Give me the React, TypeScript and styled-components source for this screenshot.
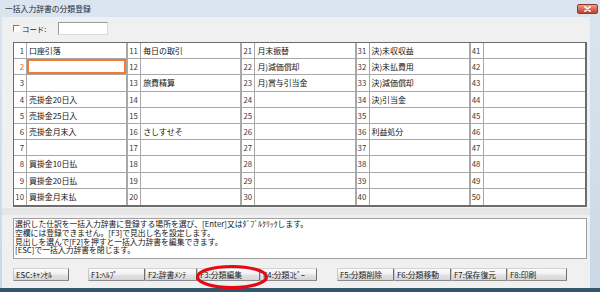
import React from 'react';
import styled, { createGlobalStyle } from 'styled-components';

const FONT = `"Noto Sans CJK JP", "Noto Sans", sans-serif`;

const GlobalStyle = createGlobalStyle`
  html, body { margin: 0; padding: 0; background: #ffffff; }
  body { width: 600px; height: 292px; overflow: hidden; font-family: ${FONT}; }
`;

const Window = styled.div`
  position: relative;
  width: 600px;
  height: 292px;
  box-sizing: border-box;
  display: flex;
  flex-direction: column;
  background: linear-gradient(to bottom, #dbe5ef, #cbd8e5);
  border-bottom: 4px solid #33566a;
  font-family: ${FONT};
`;

const TitleBar = styled.div`
  height: 17px;
  flex: none;
  display: flex;
  align-items: center;
  justify-content: space-between;
  padding: 0 2px 0 5px;
`;

const Title = styled.span`
  font-size: 7.8px;
  color: #1c2733;
`;

const CloseButton = styled.div`
  width: 21px;
  height: 10px;
  box-sizing: border-box;
  border-radius: 2px;
  border: 1px solid #8b3a2f;
  background: linear-gradient(to bottom, #e8a395 0%, #d46a57 50%, #c2412c 100%);
  display: flex;
  align-items: center;
  justify-content: center;
`;

const Client = styled.div`
  flex: 1;
  margin: 0 10px 0 2px;
  background: #f0f0f0;
  display: flex;
  flex-direction: column;
  padding: 5px 3px 0 11px;
  min-height: 0;
`;

const CodeRow = styled.div`
  height: 13px;
  display: flex;
  align-items: center;
`;

const CheckBox = styled.span`
  width: 7px;
  height: 7px;
  box-sizing: border-box;
  background: #ffffff;
  border-top: 1px solid #7a7a7a;
  border-left: 1px solid #7a7a7a;
  border-right: 1px solid #ffffff;
  border-bottom: 1px solid #ffffff;
  flex: none;
`;

const CodeLabel = styled.span`
  width: 36px;
  margin-left: 2px;
  font-size: 7.4px;
  color: #1a1a1a;
`;

const CodeInput = styled.div`
  width: 50px;
  height: 13px;
  box-sizing: border-box;
  background: #ffffff;
  border: 1px solid;
  border-color: #9a9a9a #dadada #dadada #9a9a9a;
`;

const Grid = styled.div`
  margin-top: 7px;
  height: 165px;
  flex: none;
  box-sizing: border-box;
  background: #ffffff;
  border: 1px solid #6c6c6c;
  border-right-width: 2px;
  border-bottom-width: 2px;
  display: grid;
  grid-template-columns: repeat(5, 13px 1fr);
  grid-template-rows: repeat(10, 1fr);
`;

const NumCell = styled.div<{ $first: boolean; $lastRow: boolean; $active: boolean }>`
  box-sizing: border-box;
  border-right: 1px solid #a8a8a8;
  border-bottom: ${p => (p.$lastRow ? 'none' : '1px solid #a8a8a8')};
  display: flex;
  align-items: center;
  justify-content: ${p => (p.$first ? 'flex-end' : 'flex-start')};
  padding: ${p => (p.$first ? '0 2px 0 0' : '0 0 0 1px')};
  font-size: 7.8px;
  color: ${p => (p.$active ? '#e2642c' : '#3b3b3b')};
  overflow: hidden;
`;

const TextCell = styled.div<{ $lastCol: boolean; $lastRow: boolean; $active: boolean }>`
  box-sizing: border-box;
  border-right: ${p => (p.$lastCol ? 'none' : '2px solid #a8a8a8')};
  border-bottom: ${p => (p.$lastRow ? 'none' : '1px solid #a8a8a8')};
  display: flex;
  align-items: center;
  padding-left: 2px;
  font-size: 8px;
  letter-spacing: -0.1px;
  color: #141414;
  white-space: nowrap;
  overflow: hidden;
  box-shadow: ${p => (p.$active ? 'inset 0 0 0 2px #f47a30' : 'none')};
`;

const Band = styled.div`
  margin: 1px -3px 0 -11px;
  height: 7px;
  flex: none;
  background: #e6e6e6;
`;

const Message = styled.div`
  margin-top: 3px;
  height: 41px;
  flex: none;
  box-sizing: border-box;
  background: #ffffff;
  border: 1px solid #a0a0a0;
  padding: 1px 1px 0 1px;
  font-size: 7.8px;
  line-height: 8.8px;
  color: #141414;
  white-space: pre;
  overflow: hidden;
`;

const ButtonBar = styled.div`
  margin-top: 9px;
  height: 13px;
  flex: none;
  display: flex;
`;

const Spacer = styled.div<{ $w: number }>`
  width: ${p => p.$w}px;
  flex: none;
`;

const FButton = styled.div<{ $w: number }>`
  width: ${p => p.$w}px;
  height: 13px;
  flex: none;
  box-sizing: border-box;
  padding-left: 2px;
  display: flex;
  align-items: center;
  font-size: 7.8px;
  color: #1a1a1a;
  white-space: nowrap;
  overflow: hidden;
  background: linear-gradient(to bottom, #fbfbfb 0%, #f1f1f1 45%, #e3e3e3 55%, #d5d5d5 100%);
  border: 1px solid;
  border-color: #d2d2d2 #6e6e6e #8a8a8a #c9c9c9;
  border-radius: 1px;
`;

const Annotation = styled.svg`
  position: absolute;
  left: 193px;
  top: 262px;
  width: 80px;
  height: 30px;
  pointer-events: none;
`;

const columns: { n: number; t: string }[][] = [
  [
    { n: 1, t: '口座引落' }, { n: 2, t: '' }, { n: 3, t: '' }, { n: 4, t: '売掛金20日入' },
    { n: 5, t: '売掛金25日入' }, { n: 6, t: '売掛金月末入' }, { n: 7, t: '' },
    { n: 8, t: '買掛金10日払' }, { n: 9, t: '買掛金20日払' }, { n: 10, t: '買掛金月末払' },
  ],
  [
    { n: 11, t: '毎日の取引' }, { n: 12, t: '' }, { n: 13, t: '旅費精算' }, { n: 14, t: '' },
    { n: 15, t: '' }, { n: 16, t: 'さしすせそ' }, { n: 17, t: '' }, { n: 18, t: '' },
    { n: 19, t: '' }, { n: 20, t: '' },
  ],
  [
    { n: 21, t: '月末振替' }, { n: 22, t: '月)減価償却' }, { n: 23, t: '月)賞与引当金' },
    { n: 24, t: '' }, { n: 25, t: '' }, { n: 26, t: '' }, { n: 27, t: '' }, { n: 28, t: '' },
    { n: 29, t: '' }, { n: 30, t: '' },
  ],
  [
    { n: 31, t: '決)未収収益' }, { n: 32, t: '決)未払費用' }, { n: 33, t: '決)減価償却' },
    { n: 34, t: '決)引当金' }, { n: 35, t: '' }, { n: 36, t: '利益処分' }, { n: 37, t: '' },
    { n: 38, t: '' }, { n: 39, t: '' }, { n: 40, t: '' },
  ],
  [
    { n: 41, t: '' }, { n: 42, t: '' }, { n: 43, t: '' }, { n: 44, t: '' }, { n: 45, t: '' },
    { n: 46, t: '' }, { n: 47, t: '' }, { n: 48, t: '' }, { n: 49, t: '' }, { n: 50, t: '' },
  ],
];

const ACTIVE = 2;

const message = [
  '選択した仕訳を一括入力辞書に登録する場所を選び、[Enter]又はﾀﾞﾌﾞﾙｸﾘｯｸします。',
  '空欄には登録できません。[F3]で見出し名を設定します。',
  '見出しを選んで[F2]を押すと一括入力辞書を編集できます。',
  '[ESC]で一括入力辞書を閉じます。',
].join('\n');

const leftButtons = [
  { label: 'F1:ﾍﾙﾌﾟ', w: 57 },
  { label: 'F2:辞書ﾒﾝﾃ', w: 52 },
  { label: 'F3:分類編集', w: 63 },
  { label: 'F4:分類ｺﾋﾟｰ', w: 57 },
];

const rightButtons = [
  { label: 'F5:分類削除', w: 57 },
  { label: 'F6:分類移動', w: 57 },
  { label: 'F7:保存復元', w: 56 },
  { label: 'F8:印刷', w: 60 },
];

export default function App() {
  const cells: React.ReactNode[] = [];
  for (let r = 0; r < 10; r++) {
    for (let g = 0; g < 5; g++) {
      const item = columns[g][r];
      const active = item.n === ACTIVE;
      const lastRow = r === 9;
      cells.push(
        <NumCell key={`n${item.n}`} $first={g === 0} $lastRow={lastRow} $active={active}>
          {item.n}
        </NumCell>,
      );
      cells.push(
        <TextCell key={`t${item.n}`} $lastCol={g === 4} $lastRow={lastRow} $active={active}>
          {item.t}
        </TextCell>,
      );
    }
  }

  return (
    <>
      <GlobalStyle />
      <Window>
        <TitleBar>
          <Title>一括入力辞書の分類登録</Title>
          <CloseButton>
            <svg width="7" height="6" viewBox="0 0 7 6">
              <path d="M1 0.8 L6 5.2 M6 0.8 L1 5.2" stroke="#ffffff" strokeWidth="1.6" strokeLinecap="round" />
            </svg>
          </CloseButton>
        </TitleBar>
        <Client>
          <CodeRow>
            <CheckBox />
            <CodeLabel>コード:</CodeLabel>
            <CodeInput />
          </CodeRow>
          <Grid>{cells}</Grid>
          <Band />
          <Message>{message}</Message>
          <ButtonBar>
            <FButton $w={56}>ESC:ｷｬﾝｾﾙ</FButton>
            <Spacer $w={19} />
            {leftButtons.map(b => (
              <FButton key={b.label} $w={b.w}>{b.label}</FButton>
            ))}
            <Spacer $w={20} />
            {rightButtons.map(b => (
              <FButton key={b.label} $w={b.w}>{b.label}</FButton>
            ))}
          </ButtonBar>
        </Client>
        <Annotation viewBox="0 0 80 30">
          <ellipse cx="39" cy="15" rx="34.5" ry="10.5" fill="none" stroke="#e50914" strokeWidth="3.2" />
        </Annotation>
      </Window>
    </>
  );
}
